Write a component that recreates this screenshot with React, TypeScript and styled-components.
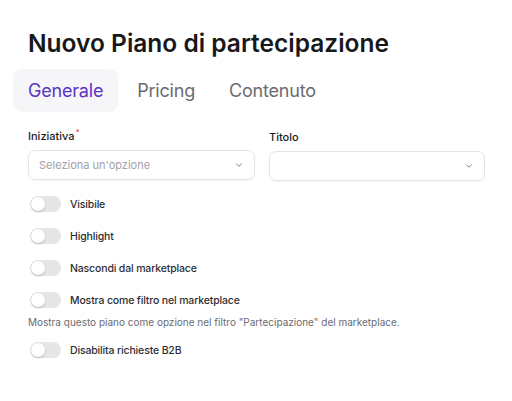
import styled, { createGlobalStyle } from "styled-components";

const Global = createGlobalStyle`
  body {
    margin: 0;
    background: #ffffff;
    font-family: Inter, "Noto Sans", sans-serif;
    color: #1c1c1e;
  }
`;

const Page = styled.main`
  padding: 27px 0 0 28px;
`;

const Title = styled.h1`
  margin: 0;
  font-size: 24.5px;
  line-height: 32px;
  font-weight: 600;
  letter-spacing: 0;
  color: #18181b;
`;

const Tabs = styled.nav`
  display: flex;
  gap: 4px;
  margin: 10px 0 0 -15px;
`;

const Tab = styled.button<{ $active?: boolean }>`
  border: 0;
  border-radius: 9px;
  height: 43px;
  padding: 0 15px;
  font-family: inherit;
  font-size: 18px;
  letter-spacing: -0.2px;
  background: ${(p) => (p.$active ? "#f6f6f8" : "transparent")};
  color: ${(p) => (p.$active ? "#5b34c4" : "#6b6b70")};
`;

const Fields = styled.div`
  display: grid;
  grid-template-columns: 227px 216px;
  gap: 14px;
  margin-top: 17px;
`;

const Field = styled.div<{ $offset?: number }>`
  display: flex;
  flex-direction: column;
  gap: 7px;
  padding-top: ${(p) => p.$offset ?? 0}px;
`;

const Label = styled.label`
  font-size: 11px;
  font-weight: 500;
  color: #1c1c1e;
  line-height: 14px;

  sup {
    color: #e5484d;
    font-size: 8px;
    line-height: 0;
    vertical-align: 5px;
    margin-left: 1px;
  }
`;

const Select = styled.div`
  height: 30px;
  box-sizing: border-box;
  border: 1px solid #e4e4e7;
  border-radius: 7px;
  display: flex;
  align-items: center;
  justify-content: space-between;
  padding: 0 10px;
  font-size: 11px;
  color: #a1a1aa;
  box-shadow: 0 1px 2px rgba(0, 0, 0, 0.04);
`;

const Toggles = styled.div`
  display: flex;
  flex-direction: column;
  margin-top: 7px;
`;

const ToggleRow = styled.div`
  display: flex;
  align-items: center;
  gap: 9px;
  height: 32px;
`;

const Track = styled.span`
  width: 31px;
  height: 16px;
  border-radius: 8px;
  background: #e6e6e8;
  position: relative;
  margin-left: 2px;
`;

const Knob = styled.span`
  position: absolute;
  left: 1px;
  top: 1px;
  width: 14px;
  height: 14px;
  border-radius: 50%;
  background: #ffffff;
  box-shadow: 0 1px 2px rgba(0, 0, 0, 0.2);
`;

const ToggleLabel = styled.span`
  font-size: 10.5px;
  font-weight: 500;
  color: #2e2e33;
  letter-spacing: -0.15px;
`;

const Help = styled.p`
  margin: -1px 0 5px;
  font-size: 10px;
  line-height: 14px;
  color: #6b6b70;
`;

const Chevron = () => (
  <svg width="10" height="10" viewBox="0 0 24 24" fill="none" stroke="#71717a" strokeWidth="2.2" strokeLinecap="round" strokeLinejoin="round">
    <path d="m6 9 6 6 6-6" />
  </svg>
);

const Toggle = ({ label }: { label: string }) => (
  <ToggleRow>
    <Track>
      <Knob />
    </Track>
    <ToggleLabel>{label}</ToggleLabel>
  </ToggleRow>
);

export default function App() {
  return (
    <Page>
      <Global />
      <Title>Nuovo Piano di partecipazione</Title>
      <Tabs>
        <Tab $active>Generale</Tab>
        <Tab>Pricing</Tab>
        <Tab>Contenuto</Tab>
      </Tabs>
      <Fields>
        <Field>
          <Label>
            Iniziativa<sup>*</sup>
          </Label>
          <Select>
            <span>Seleziona un'opzione</span>
            <Chevron />
          </Select>
        </Field>
        <Field $offset={1}>
          <Label>Titolo</Label>
          <Select>
            <span />
            <Chevron />
          </Select>
        </Field>
      </Fields>
      <Toggles>
        <Toggle label="Visibile" />
        <Toggle label="Highlight" />
        <Toggle label="Nascondi dal marketplace" />
        <Toggle label="Mostra come filtro nel marketplace" />
        <Help>Mostra questo piano come opzione nel filtro "Partecipazione" del marketplace.</Help>
        <Toggle label="Disabilita richieste B2B" />
      </Toggles>
    </Page>
  );
}
